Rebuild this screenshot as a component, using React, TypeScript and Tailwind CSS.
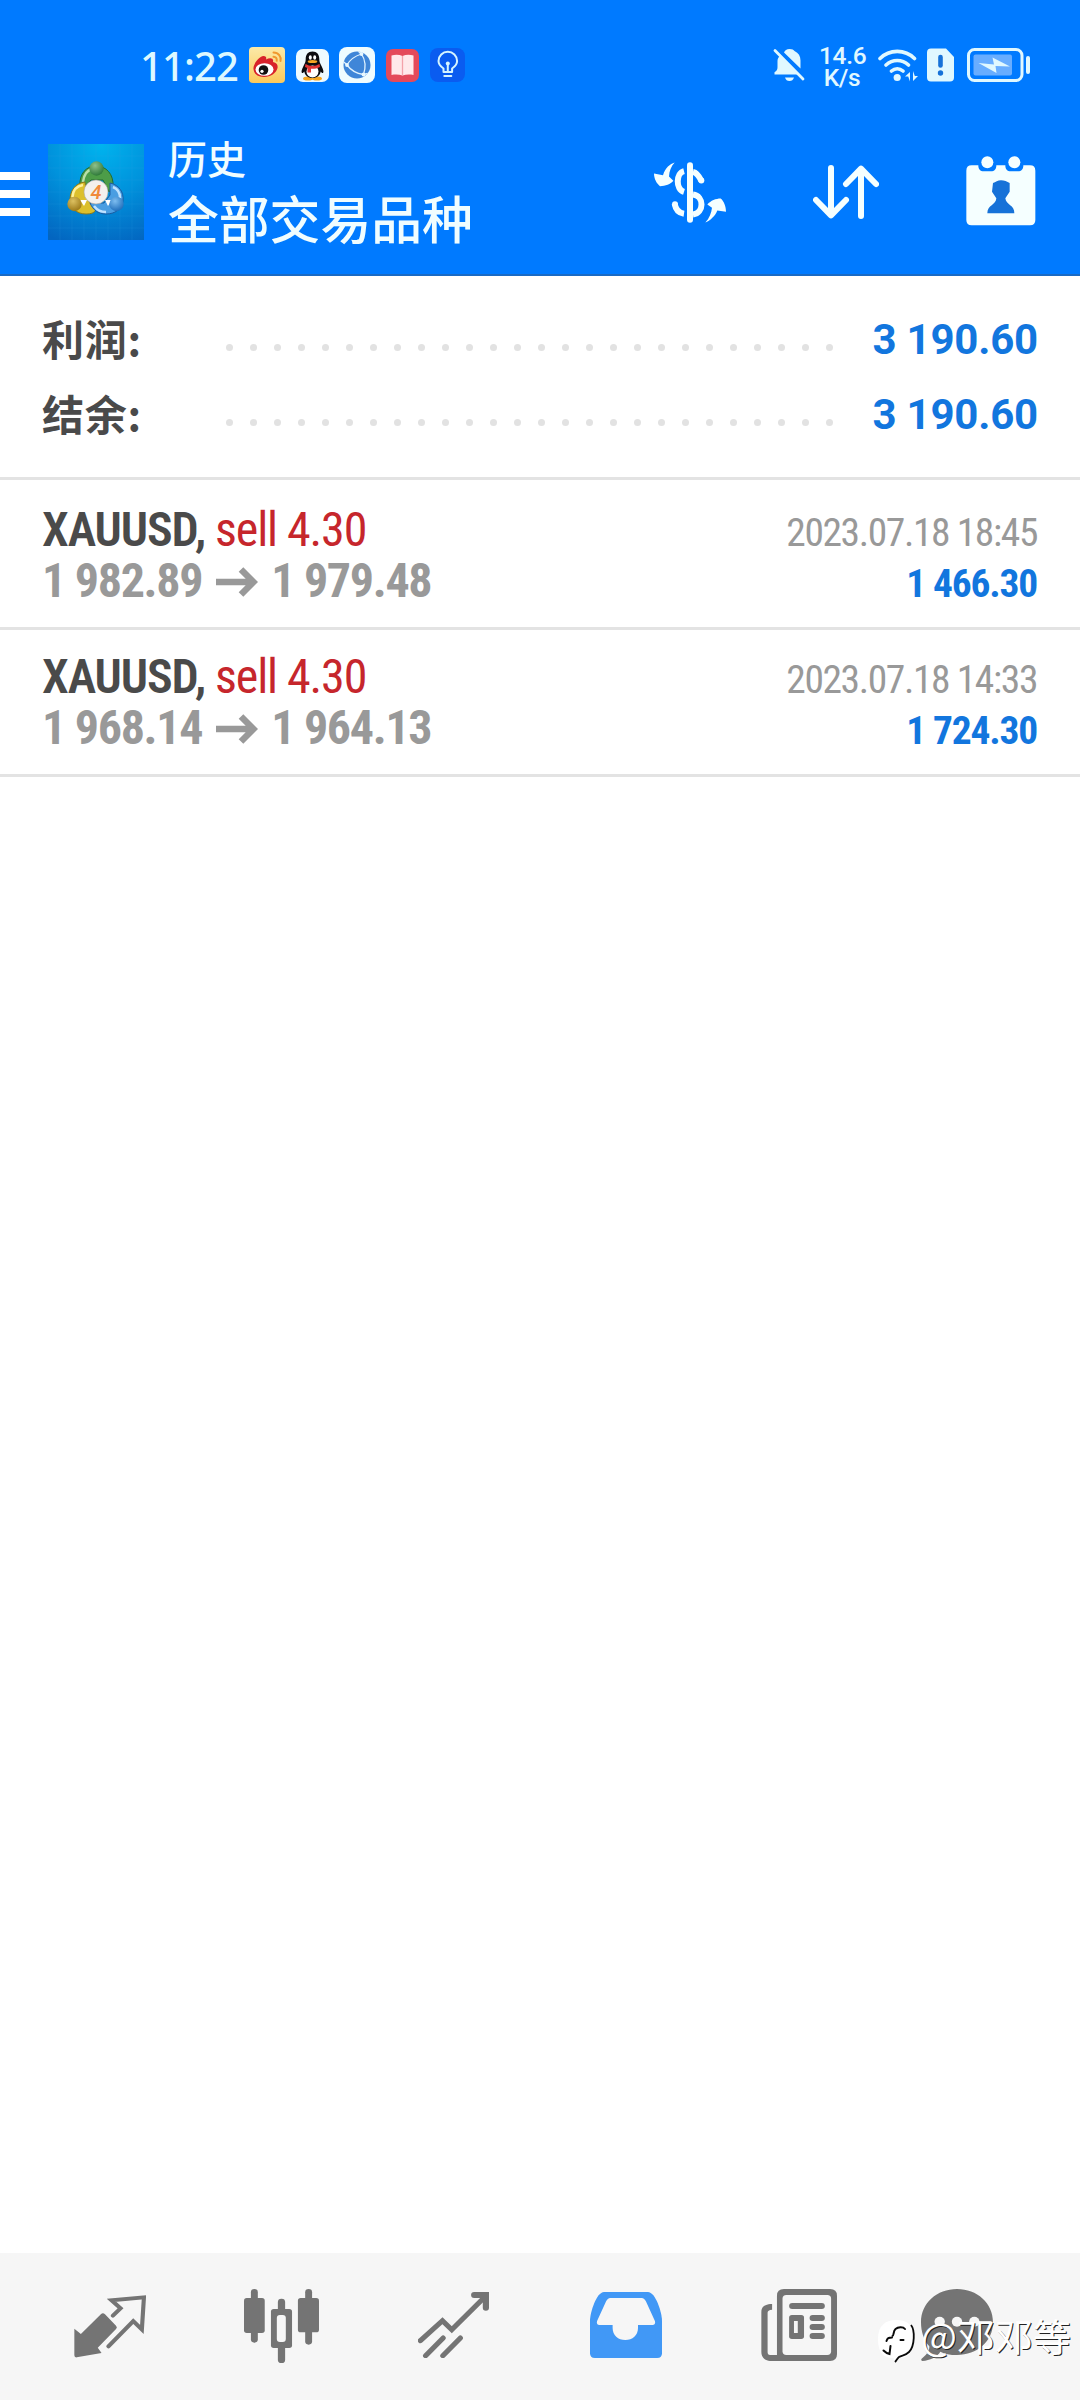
import React from "react";

type TDeal = {
  symbol: string;
  volume: string;
  open: string;
  close: string;
  time: string;
  profit: string;
};

const dealListData: TDeal[] = [
  {
    symbol: "XAUUSD,",
    volume: "sell 4.30",
    open: "1 982.89",
    close: "1 979.48",
    time: "2023.07.18 18:45",
    profit: "1 466.30",
  },
  {
    symbol: "XAUUSD,",
    volume: "sell 4.30",
    open: "1 968.14",
    close: "1 964.13",
    time: "2023.07.18 14:33",
    profit: "1 724.30",
  },
];

const summaryListData = [
  { title: "利润:", value: "3 190.60" },
  { title: "结余:", value: "3 190.60" },
];

const AppIcons = () => (
  <div className="flex items-center">
    {/* weibo */}
    <svg className="w-9 h-9" viewBox="0 0 36 36">
      <defs>
        <linearGradient id="weibo" x1="0" y1="0" x2="0" y2="1">
          <stop offset="0" stopColor="#fbeaa8" />
          <stop offset="1" stopColor="#fbc95c" />
        </linearGradient>
      </defs>
      <rect width="36" height="36" rx="4" fill="url(#weibo)" />
      <path
        d="M4.500 22C4 17 10 9.500 14.500 9c3 0 3 2 2.500 3.500 4-2 8-1.500 7 2.500 4 .8 5 3 4.500 6-1 5-7 9-13.500 9S5 27 4.500 22Z"
        fill="#d8222a"
      />
      <ellipse cx="15.500" cy="22.500" rx="9" ry="6.300" fill="#fff" />
      <circle cx="14.500" cy="23" r="4.800" fill="#111" />
      <circle cx="13" cy="24.300" r="1.600" fill="#fff" />
      <path
        d="M24.500 5.500c5 0 8 4 7 8.500M24.500 9.700c2.500 0 3.600 1.800 3.200 4"
        fill="none"
        stroke="#f0982e"
        strokeWidth="2"
        strokeLinecap="round"
      />
    </svg>
    {/* qq */}
    <svg className="ml-[11px] w-[33px] h-[33px]" viewBox="0 0 33 33">
      <rect width="33" height="33" rx="7" fill="#eefaff" />
      <ellipse cx="12" cy="29.500" rx="5" ry="2" fill="#f5a623" />
      <ellipse cx="21" cy="29.500" rx="5" ry="2" fill="#f5a623" />
      <path
        d="M16.500 2.500c4.500 0 6.800 3 6.800 7.500 0 3 .7 4 2.200 7 1.800 3.500 2.500 6 1.500 7-.8.5-1.800-1-2.300-1.500-.7 4-3.700 6.500-8.200 6.500S9 26.500 8.300 22.500C7.800 23 6.800 24.500 6 24c-1-1-.3-3.500 1.500-7 1.500-3 2.200-4 2.200-7 0-4.500 2.300-7.500 6.800-7.500Z"
        fill="#0c0c10"
      />
      <ellipse cx="16.500" cy="22.500" rx="6" ry="6" fill="#fff" />
      <ellipse cx="14.300" cy="8.500" rx="1.500" ry="2.200" fill="#fff" />
      <ellipse cx="18.700" cy="8.500" rx="1.500" ry="2.200" fill="#fff" />
      <ellipse cx="16.500" cy="12.500" rx="4.800" ry="1.500" fill="#f5a623" />
      <path d="M9.500 15c4.500 2.500 9.500 2.500 14 0l.5 3c-3 1.500-6 2-9 1.800v3.700h-3.500v-4.500L9 18Z" fill="#e03535" />
    </svg>
    {/* browser */}
    <svg className="ml-[10px] w-9 h-9" viewBox="0 0 36 36">
      <rect width="36" height="36" rx="8" fill="#effcff" />
      <circle cx="18" cy="18" r="13.500" fill="#3f86d8" />
      <g fill="none" stroke="#dff2ff" strokeWidth="1.300">
        <path d="M22.500 7C16 9 11 12.500 8 18M8 18c4 5.500 9 8.500 16.500 9.500M22.500 7c4 6 4.500 13 2 20.500" />
        <path d="M8 18 5 15M22.500 7l-3-2.500M24.500 27.500l4-1" />
      </g>
      <circle cx="22.500" cy="7" r="1.900" fill="#e8f8ff" />
      <circle cx="8" cy="18" r="1.900" fill="#e8f8ff" />
      <circle cx="24.500" cy="27.500" r="1.900" fill="#e8f8ff" />
    </svg>
    {/* reader */}
    <svg className="ml-[11px] w-[33px] h-[33px]" viewBox="0 0 33 33">
      <rect width="33" height="33" rx="7" fill="#e44a5a" />
      <path d="M5.500 6.500c4-1 8-.8 11 .5 3-1.300 7-1.500 11-.5V26c-4-.8-8-.5-11 .5-3-1-7-1.300-11-.5Z" fill="#ffe9ea" />
      <path d="M16.500 7v19.500" stroke="#f3a3aa" strokeWidth="1.300" />
    </svg>
    {/* tips */}
    <svg className="ml-[11px] w-[35px] h-[34px]" viewBox="0 0 35 34">
      <rect width="35" height="34" rx="8" fill="#0a5cf0" />
      <g fill="none" stroke="#d5f4ff" strokeWidth="2" strokeLinejoin="round" strokeLinecap="round">
        <path d="M13.500 24v-3.500C10.500 18.500 8.500 16.500 8.500 13a9.300 9.300 0 0 1 18.600 0c0 3.500-2 5.500-5 7.500V24ZM14.300 28h7M17.800 16v7" />
      </g>
      <circle cx="17.800" cy="15.500" r="2" fill="#d5f4ff" />
    </svg>
  </div>
);

const StatusIcons = () => (
  <div className="flex items-center text-[#e0f8ff]">
    <svg className="w-[34px] h-[36px]" viewBox="0 0 34 36" fill="currentColor">
      <path d="M11 5.500C12 3.500 13.500 2 16.500 2s4 .8 5 2c4 2 6 5 6 9.500v8L11 5.500ZM7 9l18 18.500H1.500v-2.300c2-1.200 3-2.500 3-5V14c0-2 .8-3.800 2.500-5ZM12 30.500h9c-.8 2.500-2.300 3.500-4.500 3.500S12.700 33 12 30.500Z" />
      <path d="M2 3.500 30 32" stroke="currentColor" strokeWidth="2.800" strokeLinecap="round" />
    </svg>
    <div className="ml-3 mt-[3px] w-[46px] text-center font-['Roboto'] [font-stretch:88%] font-medium text-[24.500px] leading-[22px] tracking-[-0.3px]">
      <div>14.6</div>
      <div>K/s</div>
    </div>
    <svg className="ml-[13px] w-[41px] h-[36px]" viewBox="0 0 41 36" fill="none" stroke="currentColor" strokeLinecap="round">
      <path d="M2 11.500c9.500-9.500 25-9.500 34.500 0M8 18c6.500-6 16-6 22.500 0M13.500 24c3.500-3 8-3 11.500 0" strokeWidth="3.600" />
      <circle cx="19.200" cy="30.500" r="3.600" fill="currentColor" stroke="none" />
      <path d="M27 29.500 32 25v9.500l-1.800-5ZM40 29l-5 5v-10l1.800 5Z" fill="currentColor" stroke="none" />
    </svg>
    <svg className="ml-2 w-[27px] h-[34px]" viewBox="0 0 27 34">
      <path d="M4 .5h15L27 9v20.500a4 4 0 0 1-4 4H4a4 4 0 0 1-4-4v-25a4 4 0 0 1 4-4Z" fill="currentColor" />
      <path d="M13.500 9v8.500" stroke="#1672d8" strokeWidth="4.600" strokeLinecap="round" />
      <circle cx="13.500" cy="25" r="2.700" fill="#1672d8" />
    </svg>
    <svg className="ml-[13px] w-[64px] h-[34px]" viewBox="0 0 64 34">
      <rect x="1.500" y="1.500" width="53.500" height="31" rx="6" fill="none" stroke="currentColor" strokeWidth="3" />
      <rect x="6.500" y="6.500" width="38.500" height="21" rx="2" fill="#68adff" />
      <path d="M11.500 15 27 16.500 25.500 9.500 43 18.500 28.500 18 29.500 25Z" fill="currentColor" />
      <rect x="59" y="8" width="4" height="18" rx="2" fill="currentColor" />
    </svg>
  </div>
);

const Logo = () => (
  <svg className="w-24 h-24" viewBox="0 0 96 96">
    <defs>
      <radialGradient id="sky" cx="0.55" cy="0" r="1.1">
        <stop offset="0" stopColor="#00b4ee" />
        <stop offset="0.5" stopColor="#0092dc" />
        <stop offset="1" stopColor="#0365c0" />
      </radialGradient>
      <radialGradient id="green" cx="0.4" cy="0.3" r="0.8">
        <stop offset="0" stopColor="#8fc08a" />
        <stop offset="1" stopColor="#22702f" />
      </radialGradient>
      <radialGradient id="gold" cx="0.4" cy="0.3" r="0.8">
        <stop offset="0" stopColor="#dcc060" />
        <stop offset="1" stopColor="#94700f" />
      </radialGradient>
      <radialGradient id="blue" cx="0.4" cy="0.3" r="0.8">
        <stop offset="0" stopColor="#7dbdf0" />
        <stop offset="1" stopColor="#1464b4" />
      </radialGradient>
    </defs>
    <rect width="96" height="96" fill="url(#sky)" />
    <path
      d="M0 12h96M0 24h96M0 36h96M0 48h96M0 60h96M0 72h96M0 84h96M12 0v96M24 0v96M36 0v96M48 0v96M60 0v96M72 0v96M84 0v96"
      stroke="#35a5ea"
      strokeOpacity="0.15"
    />
    <path d="M32 42c-1-12 6-20 16-20s18 8 17 21l-4 5-6-12H43l-6 6Z" fill="#4d9d48" stroke="#256b2d" />
    <path d="M35 38c1-8 5-12 9-13" fill="none" stroke="#b9dfa8" strokeWidth="2.500" />
    <path d="M37 38c-10 1-15 9-15 18 0 8 7 14 16 14 5 0 8-1 10-4l-9-11Z" fill="#dcbf2c" stroke="#8d7a19" />
    <path d="M35 41c-7 1-10 6-10.500 12" fill="none" stroke="#fff09a" strokeWidth="2.500" />
    <path d="M62 39c9 2 14 9 13 18-1 8-8 13-17 13-8 0-13-4-16-11l14 0 6-8Z" fill="#4a9ee2" stroke="#1a5ca2" />
    <path d="M65 43c5 2 7 6 7 11M46 62c3 4 7 6 12 6" fill="none" stroke="#bfe2ff" strokeWidth="2.500" />
    <path d="M32 56l7 0-3 6ZM64 56l-7 0 3 6Z" fill="#fff" />
    <circle cx="48.500" cy="24.500" r="7.200" fill="url(#green)" />
    <circle cx="26.500" cy="60" r="7.200" fill="url(#gold)" />
    <circle cx="68.500" cy="60" r="7.200" fill="url(#blue)" />
    <circle cx="48" cy="48" r="12" fill="#f3f1ee" stroke="#a9a49c" strokeWidth="0.600" />
    <text x="48" y="55" textAnchor="middle" fontFamily="Roboto, sans-serif" fontSize="20" fontStyle="italic" fontWeight="500" fill="#f08a3c">
      4
    </text>
  </svg>
);

const Header = () => (
  <header className="h-[276px] bg-[#007aff] border-b-[2px] border-[#1a6ac4]">
    <div className="h-[130px] pt-[47px] pl-[140px] pr-[49px] flex items-start justify-between">
      <div className="flex items-center h-9">
        <span className="w-[109px] pt-px font-['Noto_Sans'] font-medium text-[40px] leading-9 tracking-[-0.9px] text-[#dcf8ff]">
          11:22
        </span>
        <AppIcons />
      </div>
      <div className="h-9 flex items-center">
        <StatusIcons />
      </div>
    </div>
    <div className="flex items-start">
      <div className="mt-[42px] w-[30px] flex flex-col gap-[10px]">
        <div className="h-2 bg-white" />
        <div className="h-2 bg-white" />
        <div className="h-2 bg-white" />
      </div>
      <div className="ml-[18px] mt-[14px]">
        <Logo />
      </div>
      <div className="ml-6 w-[486px] text-[#f0fdff] font-['Noto_Sans_CJK_SC',sans-serif] font-medium">
        <div className="mt-px text-[39px] leading-[52px]">历史</div>
        <div className="text-[50.800px] leading-[68px]">全部交易品种</div>
      </div>
      <svg className="mt-8 w-[72px] h-[61px]" viewBox="72 95 216 182" fill="#f5ffff">
        <path d="M134 96c-14 4-28 16-35 38l-27-5c0 16 8 30 18 38 16 0 32-6 40-16l-13-13c1-16 6-30 17-42ZM226 276c14-5 30-20 36-36l26 4c0-16-6-32-16-40-14 0-30 6-40 18l14 10c-2 16-8 32-20 44Z" />
        <rect x="171" y="95" width="18" height="182" rx="9" />
        <path
          d="M162 122c-24 6-26 54 0 62M189 124c10 2 18 12 25 27M134 220c3 18 14 28 28 30M189 192c34 4 34 56 0 60"
          fill="none"
          stroke="#f5ffff"
          strokeWidth="18"
        />
        <circle cx="214" cy="150" r="9" />
        <circle cx="135" cy="221" r="9" />
      </svg>
      <svg className="ml-[87px] mt-[35px] w-[66px] h-[54px]" viewBox="549 105 198 162" fill="none" stroke="#f5ffff" strokeWidth="18" strokeLinecap="round" strokeLinejoin="round">
        <path d="M603 114v140M558 210l45 46 45-46M693 258V116M648 162l45-46 45 46" />
      </svg>
      <svg className="ml-[87px] mt-[26px] w-[70px] h-[70px]" viewBox="1007 77 210 210">
        <path
          d="M1024 105h20c0 12 6 18 16 18h22c10 0 16-6 16-18h27c0 12 6 18 16 18h22c10 0 16-6 16-18h20q16 0 16 16v148q0 16-16 16h-175q-16 0-16-16V121q0-16 16-16Z"
          fill="#f5ffff"
        />
        <circle cx="1071" cy="96" r="18" fill="#f5ffff" />
        <circle cx="1152" cy="96" r="18" fill="#f5ffff" />
        <path
          d="M1088 158c8-2 14-8 24-8s18 4 26 8v26l-13 20c2 20 28 20 27 45h-81c0-25 26-25 27-45l-13-20Z"
          fill="#1672d8"
        />
      </svg>
    </div>
  </header>
);

const Summary = () => (
  <section className="h-[204px] pt-[20px] px-[42px] border-b-[3px] border-[#e3e3e3]">
    {summaryListData.map((item) => (
      <div key={item.title} className="h-[75px] pt-[9px] flex items-center">
        <span className="w-[184px] font-['Noto_Sans_CJK_SC',sans-serif] font-bold text-[42px] leading-[66px] tracking-[0.7px] text-[#4a4a4a]">
          {item.title}
        </span>
        <span className="mt-[18px] flex gap-[17px]">
          {Array.from({ length: 26 }, (_, index) => (
            <span key={index} className="w-[7px] h-[7px] rounded-full bg-[#e2e2e2]" />
          ))}
        </span>
        <span className="ml-auto mt-[3px] font-['Roboto'] font-bold text-[42px] leading-[66px] tracking-[-0.2px] text-[#1276de]">
          {item.value}
        </span>
      </div>
    ))}
  </section>
);

const DealItem = ({ deal }: { deal: TDeal }) => (
  <div className="h-[147px] py-[21px] px-[42px] border-b-[3px] border-[#e3e3e3] font-['Roboto_Condensed','Roboto'] [font-stretch:75%] text-[48px] leading-[51px] tracking-[-1.1px]">
    <div className="h-[51px] flex items-baseline justify-between">
      <span className="font-semibold text-[#4a4a4a]">
        {deal.symbol} <span className="font-normal text-[#c6262c]">{deal.volume}</span>
      </span>
      <span className="mr-px text-[39.500px] tracking-[-1.4px] text-[#999]">{deal.time}</span>
    </div>
    <div className="h-[51px] flex items-baseline justify-between font-bold">
      <span className="text-[#999] flex items-baseline tracking-[-1.3px]">
        {deal.open}
        <svg className="ml-[14px] mr-[13px] w-[42px] h-[30px]" viewBox="0 0 42 30" fill="none" stroke="currentColor" strokeWidth="6.500">
          <path d="M0 15h37M25 2.500 37.500 15 25 27.500" />
        </svg>
        {deal.close}
      </span>
      <span className="mr-px text-[39.500px] tracking-[-1.2px] text-[#1276de]">{deal.profit}</span>
    </div>
  </div>
);

const TabBar = () => (
  <footer className="relative h-[147px] pt-9 pl-[74px] bg-[#f6f6f6] flex items-start text-[#747474]">
    {/* quotes */}
    <svg className="mt-1.5 w-[72px] h-[63px]" viewBox="215 165 209 189" preserveAspectRatio="none">
      <path d="M216 266l19 16 58-59q6-6 12 0l32 34q5 5 0 10l-53 56 11 16-72 13q-7 1-7-6Z" fill="currentColor" />
      <path d="M328 227l22-22-26-24 94-9-6 96-25-25-72 76" fill="none" stroke="currentColor" strokeWidth="12" strokeLinecap="round" />
    </svg>
    {/* charts */}
    <svg className="ml-[98px] w-[75px] h-[74px]" viewBox="709 147 217 222" preserveAspectRatio="none" fill="currentColor">
      <rect x="729" y="147" width="20" height="161" rx="10" />
      <rect x="709" y="174" width="60" height="105" rx="8" />
      <rect x="886" y="147" width="20" height="167" rx="10" />
      <rect x="865" y="174" width="61" height="103" rx="8" />
      <rect x="807" y="176" width="21" height="193" rx="10" />
      <rect x="787" y="207" width="61" height="117" rx="8" />
      <rect x="804" y="225" width="26" height="81" rx="9" fill="#f6f6f6" />
    </svg>
    {/* trade */}
    <svg className="ml-[99px] mt-[3px] w-[71px] h-[66px]" viewBox="1214 156 206 198" preserveAspectRatio="none" fill="none" stroke="currentColor" strokeLinecap="round" strokeWidth="15">
      <path d="M1221 302l64-60 27 27 92-94M1236 347l51-53M1286 347l51-53" />
      <path d="M1377 165h34v38" strokeWidth="18" />
    </svg>
    {/* history */}
    <svg className="ml-[101px] mt-[3px] w-[72px] h-[66px]" viewBox="147 156 210 198" preserveAspectRatio="none">
      <path d="M188 156h128c22 0 41 62 41 86v98q0 14-14 14H161q-14 0-14-14v-98c0-24 19-86 41-86Z" fill="#4198f6" />
      <path d="M206 174h92c5 0 9 4 12 10l26 58c3 8-1 13-8 13h-41v9c0 22-16 36-37 36s-37-14-37-36v-9h-37c-7 0-11-5-8-13l26-58c3-6 7-10 12-10Z" fill="#f6f6f6" />
    </svg>
    {/* news */}
    <svg className="ml-[99px] w-[76px] h-[72px]" viewBox="645 147 219 216" preserveAspectRatio="none" fill="currentColor">
      <path d="M677 192c-20 0-31 8-31 24v120c0 18 12 27 30 27h168q20 0 20-20V167q0-20-20-20H711q-20 0-20 20v178h-20q-7 0-7-9V218q0-8 13-9Z" />
      <rect x="707" y="165" width="140" height="180" rx="11" fill="#f6f6f6" />
      <rect x="726" y="189" width="103" height="18" rx="9" />
      <rect x="726" y="225" width="43" height="72" rx="8" />
      <rect x="740" y="243" width="11" height="36" fill="#f6f6f6" />
      <rect x="785" y="225" width="44" height="18" rx="9" />
      <rect x="785" y="252" width="44" height="18" rx="9" />
      <rect x="785" y="279" width="44" height="18" rx="9" />
    </svg>
    {/* messages */}
    <svg className="ml-[84px] w-[72px] h-[72px]" viewBox="1109 147 208 216" preserveAspectRatio="none">
      <path d="M1213 147c58 0 104 42 104 100s-46 98-104 98c-20 0-36-3-48-10-10 16-30 26-52 28-6-2-3-7 1-10 14-12 20-22 19-34-16-18-24-44-24-72 0-58 46-100 104-100Z" fill="currentColor" />
      <g fill="#f6f6f6">
        <circle cx="1163" cy="245" r="15" />
        <circle cx="1213" cy="245" r="15" />
        <circle cx="1263" cy="245" r="15" />
      </g>
    </svg>
    {/* watermark */}
    <div className="absolute left-[877px] top-[63px] flex items-start">
      <svg className="w-[40px] h-[48px]" viewBox="0 0 40 48">
        <path d="M19 4c12 0 17 5 17.500 17 0 14-4 20-12 21-4 .500-5 2-7 4l-1-4C5 42 1 35 1 23 1 10 8 4 19 4Z" fill="#fff" />
        <path d="M34 9c4 5 4 21-2 27-4 4-7 3-10 5-2 1.500-2 3-4 5" fill="none" stroke="#0a0a0a" strokeWidth="1.800" />
        <path d="M28 13c-2-2.500-7-2-9.500 0-2.500 2-1.500 7-3 7M9.500 25c1-3 2-3.500 5.500-3.500M23.500 24h3M13.500 30l-1 8c-2-.5-4-1.500-6-3.500" fill="none" stroke="#0a0a0a" strokeWidth="2" strokeLinecap="round" />
      </svg>
      <span className="ml-[4px] mt-[-5px] font-['Noto_Sans_CJK_SC',sans-serif] text-[38px] leading-[48px] text-white [text-shadow:1px_1px_0_#222]">
        @邓邓等
      </span>
    </div>
  </footer>
);

const App = () => {
  return (
    <div className="w-[1080px] h-[2400px] bg-white flex flex-col overflow-hidden">
      <Header />
      <Summary />
      <main className="flex-1 pt-[3px]">
        {dealListData.map((deal) => (
          <DealItem key={deal.time} deal={deal} />
        ))}
      </main>
      <TabBar />
    </div>
  );
};

export default App;
